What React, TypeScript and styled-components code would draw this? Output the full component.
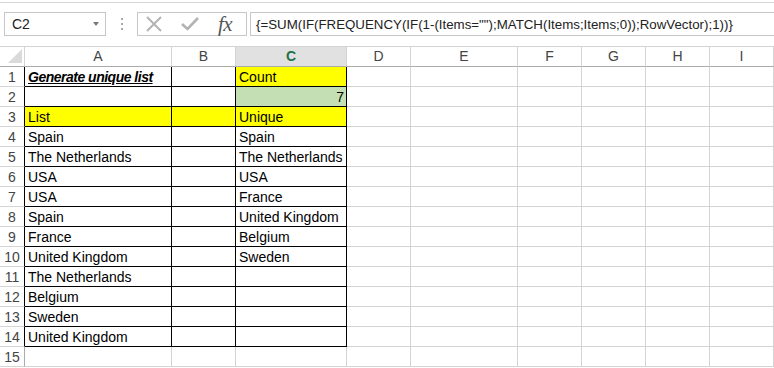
import React from 'react';
import styled, { createGlobalStyle } from 'styled-components';

const GlobalStyle = createGlobalStyle`
  html, body {
    margin: 0;
    padding: 0;
    background: #ffffff;
    font-family: 'Liberation Sans', Arial, sans-serif;
  }
  * { box-sizing: border-box; }
`;

const GRID = '#d4d4d4';
const HEAD_LINE = '#ababab';

// ========= Formula bar =========
const Sheet = styled.div`
  width: 774px;
  height: 368px;
  overflow: hidden;
  background: #ffffff;
`;

const TopStrip = styled.div`
  height: 3px;
  border-bottom: 1px solid #d6d6d6;
`;

const FormulaBar = styled.div`
  display: flex;
  align-items: center;
  height: 24px;
  margin-top: 9px;
  margin-bottom: 10px;
  padding-left: 4px;
`;

const NameBox = styled.div`
  width: 102px;
  height: 24px;
  border: 1px solid #c6c6c6;
  display: flex;
  align-items: center;
  justify-content: space-between;
  padding: 0 6px 0 7px;
  font-size: 14px;
  color: #222;
`;

const DropArrow = styled.span`
  width: 0;
  height: 0;
  border-left: 3px solid transparent;
  border-right: 3px solid transparent;
  border-top: 4px solid #7a7a7a;
`;

const Grip = styled.div`
  width: 31px;
  display: flex;
  flex-direction: column;
  align-items: center;
  gap: 3px;

  & > span {
    width: 2px;
    height: 2px;
    background: #a8a8a8;
  }
`;

const ButtonBox = styled.div`
  width: 110px;
  height: 24px;
  border: 1px solid #c6c6c6;
  display: flex;
  align-items: center;
  padding-left: 7px;
  gap: 18px;
`;

const Fx = styled.span`
  font-family: 'Liberation Serif', 'Times New Roman', serif;
  font-style: italic;
  font-size: 21px;
  color: #555555;
  letter-spacing: -0.5px;
  margin-left: 1px;
  line-height: 22px;
`;

const FormulaInput = styled.div`
  flex: 1;
  height: 24px;
  margin-left: 3px;
  margin-right: -2px;
  border: 1px solid #c6c6c6;
  display: flex;
  align-items: center;
  padding-left: 5px;
  font-size: 13.3px;
  color: #222;
  white-space: nowrap;
`;

// ========= Grid =========
const Grid = styled.div`
  display: grid;
  grid-template-columns: 25px 147px 64px 111px 64px 107px 64px 64px 64px 64px;
  grid-template-rows: 21px repeat(15, 20px);
`;

const Corner = styled.div`
  border-top: 1px solid ${GRID};
  border-right: 1px solid ${GRID};
  border-bottom: 1px solid ${HEAD_LINE};
  display: flex;
  align-items: flex-end;
  justify-content: flex-end;
  padding: 0 2px 3px 0;
`;

const Triangle = styled.span`
  width: 0;
  height: 0;
  border-left: 14px solid transparent;
  border-bottom: 14px solid #dadada;
`;

const ColHead = styled.div<{ $active?: boolean }>`
  border-top: 1px solid ${GRID};
  border-right: 1px solid ${GRID};
  border-bottom: 1px solid ${HEAD_LINE};
  background: ${(p) => (p.$active ? '#e1e1e1' : '#ffffff')};
  color: ${(p) => (p.$active ? '#217346' : '#444444')};
  font-weight: ${(p) => (p.$active ? 700 : 400)};
  font-size: 14px;
  line-height: 19px;
  text-align: center;
`;

const RowHead = styled.div<{ $inTable?: boolean }>`
  border-right: 1px solid ${(p) => (p.$inTable ? '#000' : HEAD_LINE)};
  border-bottom: 1px solid ${GRID};
  color: #444444;
  font-size: 14px;
  line-height: 17px;
  padding-top: 2px;
  text-align: center;
`;

const Cell = styled.div<{
  $boxed?: boolean;
  $fill?: string;
  $right?: boolean;
  $title?: boolean;
}>`
  border-right: 1px solid ${(p) => (p.$boxed ? '#000' : GRID)};
  border-bottom: 1px solid ${(p) => (p.$boxed ? '#000' : GRID)};
  background: ${(p) => p.$fill || 'transparent'};
  font-size: 14px;
  line-height: 17px;
  padding: 2px 2px 0 3px;
  color: #000;
  white-space: nowrap;
  overflow: visible;
  text-align: ${(p) => (p.$right ? 'right' : 'left')};
  font-weight: ${(p) => (p.$title ? 700 : 400)};
  font-style: ${(p) => (p.$title ? 'italic' : 'normal')};
  text-decoration: ${(p) => (p.$title ? 'underline' : 'none')};
  letter-spacing: ${(p) => (p.$title ? '-0.5px' : 'normal')};
`;

const YELLOW = '#ffff00';
const GREEN = '#c4dfb3';

type CellData = { text?: string; fill?: string; right?: boolean; title?: boolean };

const listA = [
  'Spain', 'The Netherlands', 'USA', 'USA', 'Spain', 'France',
  'United Kingdom', 'The Netherlands', 'Belgium', 'Sweden', 'United Kingdom',
];
const uniqueC = ['Spain', 'The Netherlands', 'USA', 'France', 'United Kingdom', 'Belgium', 'Sweden'];

const columns = ['A', 'B', 'C', 'D', 'E', 'F', 'G', 'H', 'I'];

const getCell = (row: number, col: number): CellData => {
  if (col === 0) {
    if (row === 1) return { text: 'Generate unique list', title: true };
    if (row === 3) return { text: 'List', fill: YELLOW };
    if (row >= 4 && row <= 14) return { text: listA[row - 4] };
  }
  if (col === 1 && row === 3) return { fill: YELLOW };
  if (col === 2) {
    if (row === 1) return { text: 'Count', fill: YELLOW };
    if (row === 2) return { text: '7', fill: GREEN, right: true };
    if (row === 3) return { text: 'Unique', fill: YELLOW };
    if (row >= 4 && row - 4 < uniqueC.length) return { text: uniqueC[row - 4] };
  }
  return {};
};

const CrossIcon = () => (
  <svg width="18" height="16" viewBox="0 0 18 16">
    <path d="M2 1 L16 15 M16 1 L2 15" stroke="#b3b3b3" strokeWidth="2" fill="none" />
  </svg>
);

const CheckIcon = () => (
  <svg width="18" height="14" viewBox="0 0 18 14">
    <path d="M1 7 L6.5 12 L17 1" stroke="#b3b3b3" strokeWidth="2.6" fill="none" />
  </svg>
);

const App: React.FC = () => {
  const rows = Array.from({ length: 15 }, (_, i) => i + 1);

  return (
    <Sheet>
      <GlobalStyle />
      <TopStrip />

      {/* Name box, buttons and formula */}
      <FormulaBar>
        <NameBox>
          <span>C2</span>
          <DropArrow />
        </NameBox>
        <Grip>
          <span />
          <span />
          <span />
        </Grip>
        <ButtonBox>
          <CrossIcon />
          <CheckIcon />
          <Fx>fx</Fx>
        </ButtonBox>
        <FormulaInput>
          {'{=SUM(IF(FREQUENCY(IF(1-(Items="");MATCH(Items;Items;0));RowVector);1))}'}
        </FormulaInput>
      </FormulaBar>

      {/* Worksheet */}
      <Grid>
        <Corner>
          <Triangle />
        </Corner>
        {columns.map((c) => (
          <ColHead key={c} $active={c === 'C'}>
            {c}
          </ColHead>
        ))}

        {rows.map((r) => (
          <React.Fragment key={r}>
            <RowHead $inTable={r <= 14}>{r}</RowHead>
            {columns.map((c, ci) => {
              const d = getCell(r, ci);
              return (
                <Cell
                  key={c}
                  $boxed={ci <= 2 && r <= 14}
                  $fill={d.fill}
                  $right={d.right}
                  $title={d.title}
                >
                  {d.text}
                </Cell>
              );
            })}
          </React.Fragment>
        ))}
      </Grid>
    </Sheet>
  );
};

export default App;
